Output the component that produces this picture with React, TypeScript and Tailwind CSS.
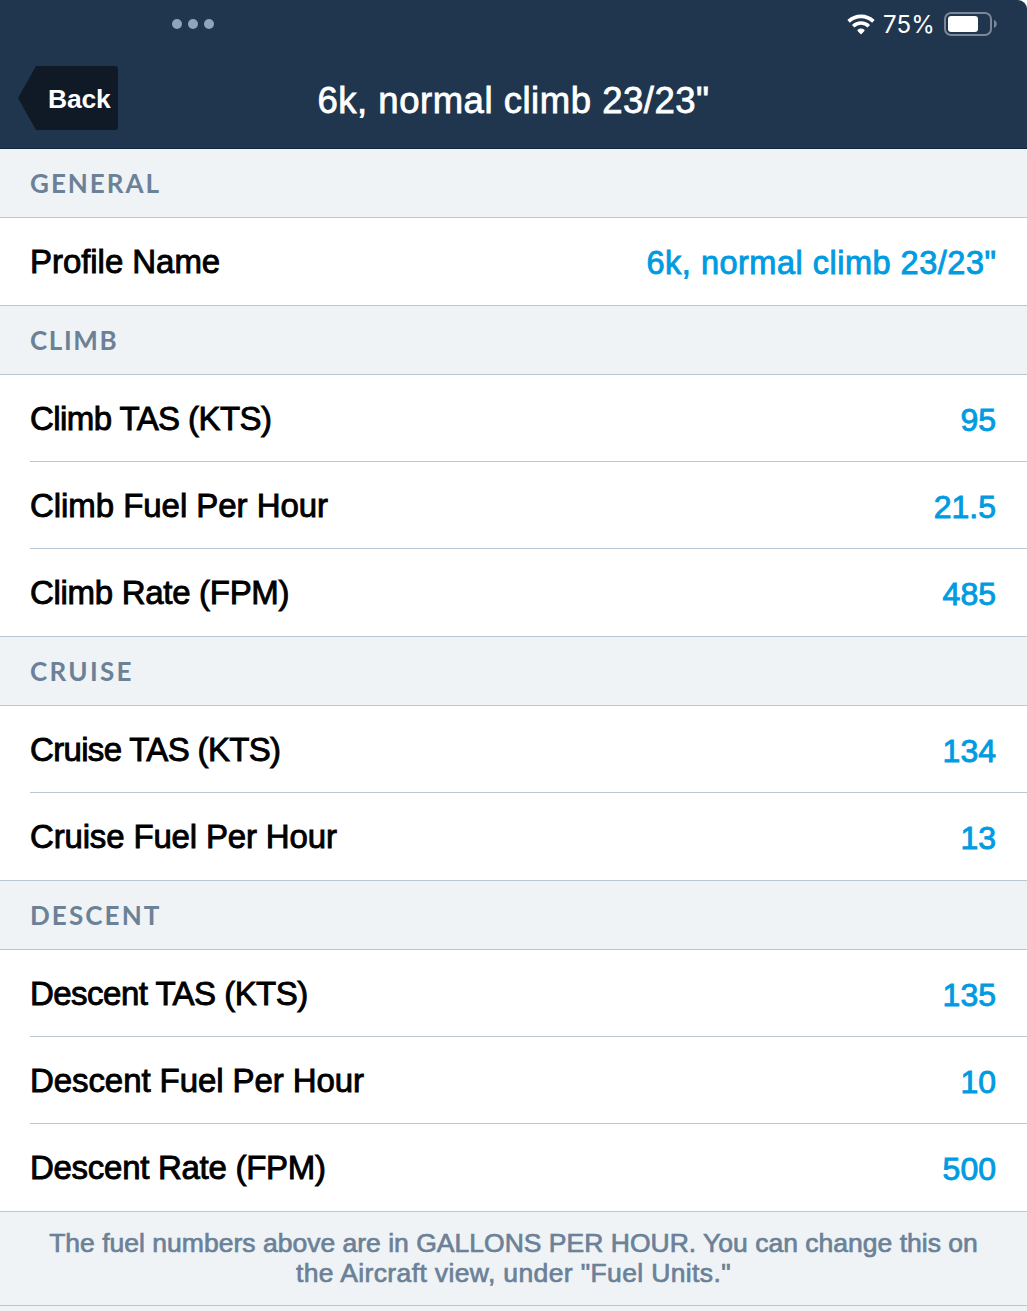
type Row = { label: string; value: string; labelClass?: string; valueClass?: string };
type Section = { title: string; titleClass: string; rows: Row[] };

const sections: Section[] = [
  {
    title: "GENERAL",
    titleClass: "tracking-[2px]",
    rows: [
      {
        label: "Profile Name",
        value: '6k, normal climb 23/23"',
        labelClass: "tracking-[-0.05px]",
        valueClass: "text-[32.5px] tracking-[0.5px] -mr-[0.5px]",
      },
    ],
  },
  {
    title: "CLIMB",
    titleClass: "tracking-[1.6px]",
    rows: [
      { label: "Climb TAS (KTS)", value: "95", labelClass: "tracking-[-0.57px]" },
      { label: "Climb Fuel Per Hour", value: "21.5", labelClass: "tracking-[-0.05px]" },
      { label: "Climb Rate (FPM)", value: "485", labelClass: "tracking-[-0.3px]" },
    ],
  },
  {
    title: "CRUISE",
    titleClass: "tracking-[2.3px]",
    rows: [
      { label: "Cruise TAS (KTS)", value: "134", labelClass: "tracking-[-0.66px]" },
      { label: "Cruise Fuel Per Hour", value: "13", labelClass: "tracking-[-0.16px]" },
    ],
  },
  {
    title: "DESCENT",
    titleClass: "tracking-[2.1px]",
    rows: [
      { label: "Descent TAS (KTS)", value: "135", labelClass: "tracking-[-0.53px]" },
      { label: "Descent Fuel Per Hour", value: "10", labelClass: "tracking-[-0.08px]" },
      { label: "Descent Rate (FPM)", value: "500", labelClass: "tracking-[-0.28px]" },
    ],
  },
];

function WifiIcon() {
  return (
    <svg width="28" height="21" viewBox="0 0 28 21" fill="none" stroke="#fff" strokeWidth="3.6">
      <path d="M1.6 7.400a17.800 17.800 0 0 1 24.800 0" />
      <path d="M6.200 12.300a11 11 0 0 1 15.600 0" />
      <path
        d="M14 19.400l-2.900-3a4.400 4.400 0 0 1 5.800 0z"
        fill="#fff"
        strokeWidth="1.400"
        strokeLinejoin="round"
      />
    </svg>
  );
}

function BatteryIcon() {
  return (
    <svg width="54" height="24" viewBox="0 0 54 24" fill="none">
      <rect x="1" y="1" width="46" height="22" rx="6" stroke="#798796" strokeWidth="2" />
      <rect x="4" y="4" width="30" height="16" rx="3.200" fill="#fff" />
      <path d="M50 8c1.700.6 2.800 2.200 2.800 4s-1.100 3.400-2.800 4z" fill="#798796" />
    </svg>
  );
}

function Header() {
  return (
    <header className="h-[149px] shrink-0 rounded-tr-[9px] border-b border-[#12263b] bg-[#20364e] text-white">
      <div className="flex h-12 items-center justify-between pr-[29px] pl-[172px]">
        <div className="flex gap-[6px]">
          <i className="size-[10px] rounded-full bg-[#8fa5be]" />
          <i className="size-[10px] rounded-full bg-[#8fa5be]" />
          <i className="size-[10px] rounded-full bg-[#8fa5be]" />
        </div>
        <div className="flex items-center">
          <WifiIcon />
          <span className="ml-[8px] w-[61px] pt-px font-[Inter,sans-serif] text-[24px] leading-6 tracking-[0.1px]">
            75%
          </span>
          <BatteryIcon />
        </div>
      </div>
      <div className="grid grid-cols-[100px_1fr_100px] items-center px-[18px] pt-[18px]">
        <button className="relative flex h-16 w-[100px] items-center">
          <svg className="absolute inset-0" width="100" height="64" viewBox="0 0 100 64">
            <path d="M18 0H97a3 3 0 0 1 3 3V61a3 3 0 0 1-3 3H18L0 32z" fill="#0f1a26" />
          </svg>
          <span className="relative pt-[4px] pl-[30px] text-[26.5px] font-bold tracking-[-0.2px]">Back</span>
        </button>
        <h1 className="pt-[5px] text-center text-[36.5px] leading-[44px] tracking-[0.52px] whitespace-nowrap [-webkit-text-stroke:0.8px_#fff]">
          6k, normal climb 23/23"
        </h1>
      </div>
    </header>
  );
}

function SectionBlock({ title, titleClass, rows }: Section) {
  return (
    <section>
      <h2
        className={`flex h-[69px] items-center border-b border-[#b9c7d2] bg-[#eff3f6] pt-px pl-[30px] font-[Lato,sans-serif] text-[26px] font-bold text-[#6b8197] ${titleClass}`}
      >
        {title}
      </h2>
      <div className="border-b border-[#b9c7d2] bg-white pl-[30px]">
        {rows.map((row) => (
          <div
            key={row.label}
            className="flex h-[87px] items-center justify-between border-b border-[#b9c7d2] pr-[31px] whitespace-nowrap last:border-b-0"
          >
            <span
              className={`pt-px text-[33px] text-black [-webkit-text-stroke:0.9px_#000] ${row.labelClass ?? ""}`}
            >
              {row.label}
            </span>
            <span
              className={`pt-[3px] text-[#009be1] [-webkit-text-stroke:0.9px_#009be1] ${row.valueClass ?? "text-[32px]"}`}
            >
              {row.value}
            </span>
          </div>
        ))}
      </div>
    </section>
  );
}

export default function App() {
  return (
    <div className="bg-white">
      <main className="flex h-[1311px] flex-col overflow-hidden font-['Liberation_Sans',Arial,sans-serif]">
        <Header />
        {sections.map((section) => (
          <SectionBlock key={section.title} {...section} />
        ))}
        <footer className="flex-1 bg-[#eff3f6]">
          <p className="h-[94px] border-b border-[#b9c7d2] pt-[16px] text-center text-[26.5px] leading-[30px] text-[#6b8197] [-webkit-text-stroke:0.7px_#6b8197]">
            <span className="block tracking-[0.01px] whitespace-nowrap">
              The fuel numbers above are in GALLONS PER HOUR. You can change this on
            </span>
            <span className="block tracking-[0.37px]">the Aircraft view, under "Fuel Units."</span>
          </p>
        </footer>
      </main>
    </div>
  );
}
